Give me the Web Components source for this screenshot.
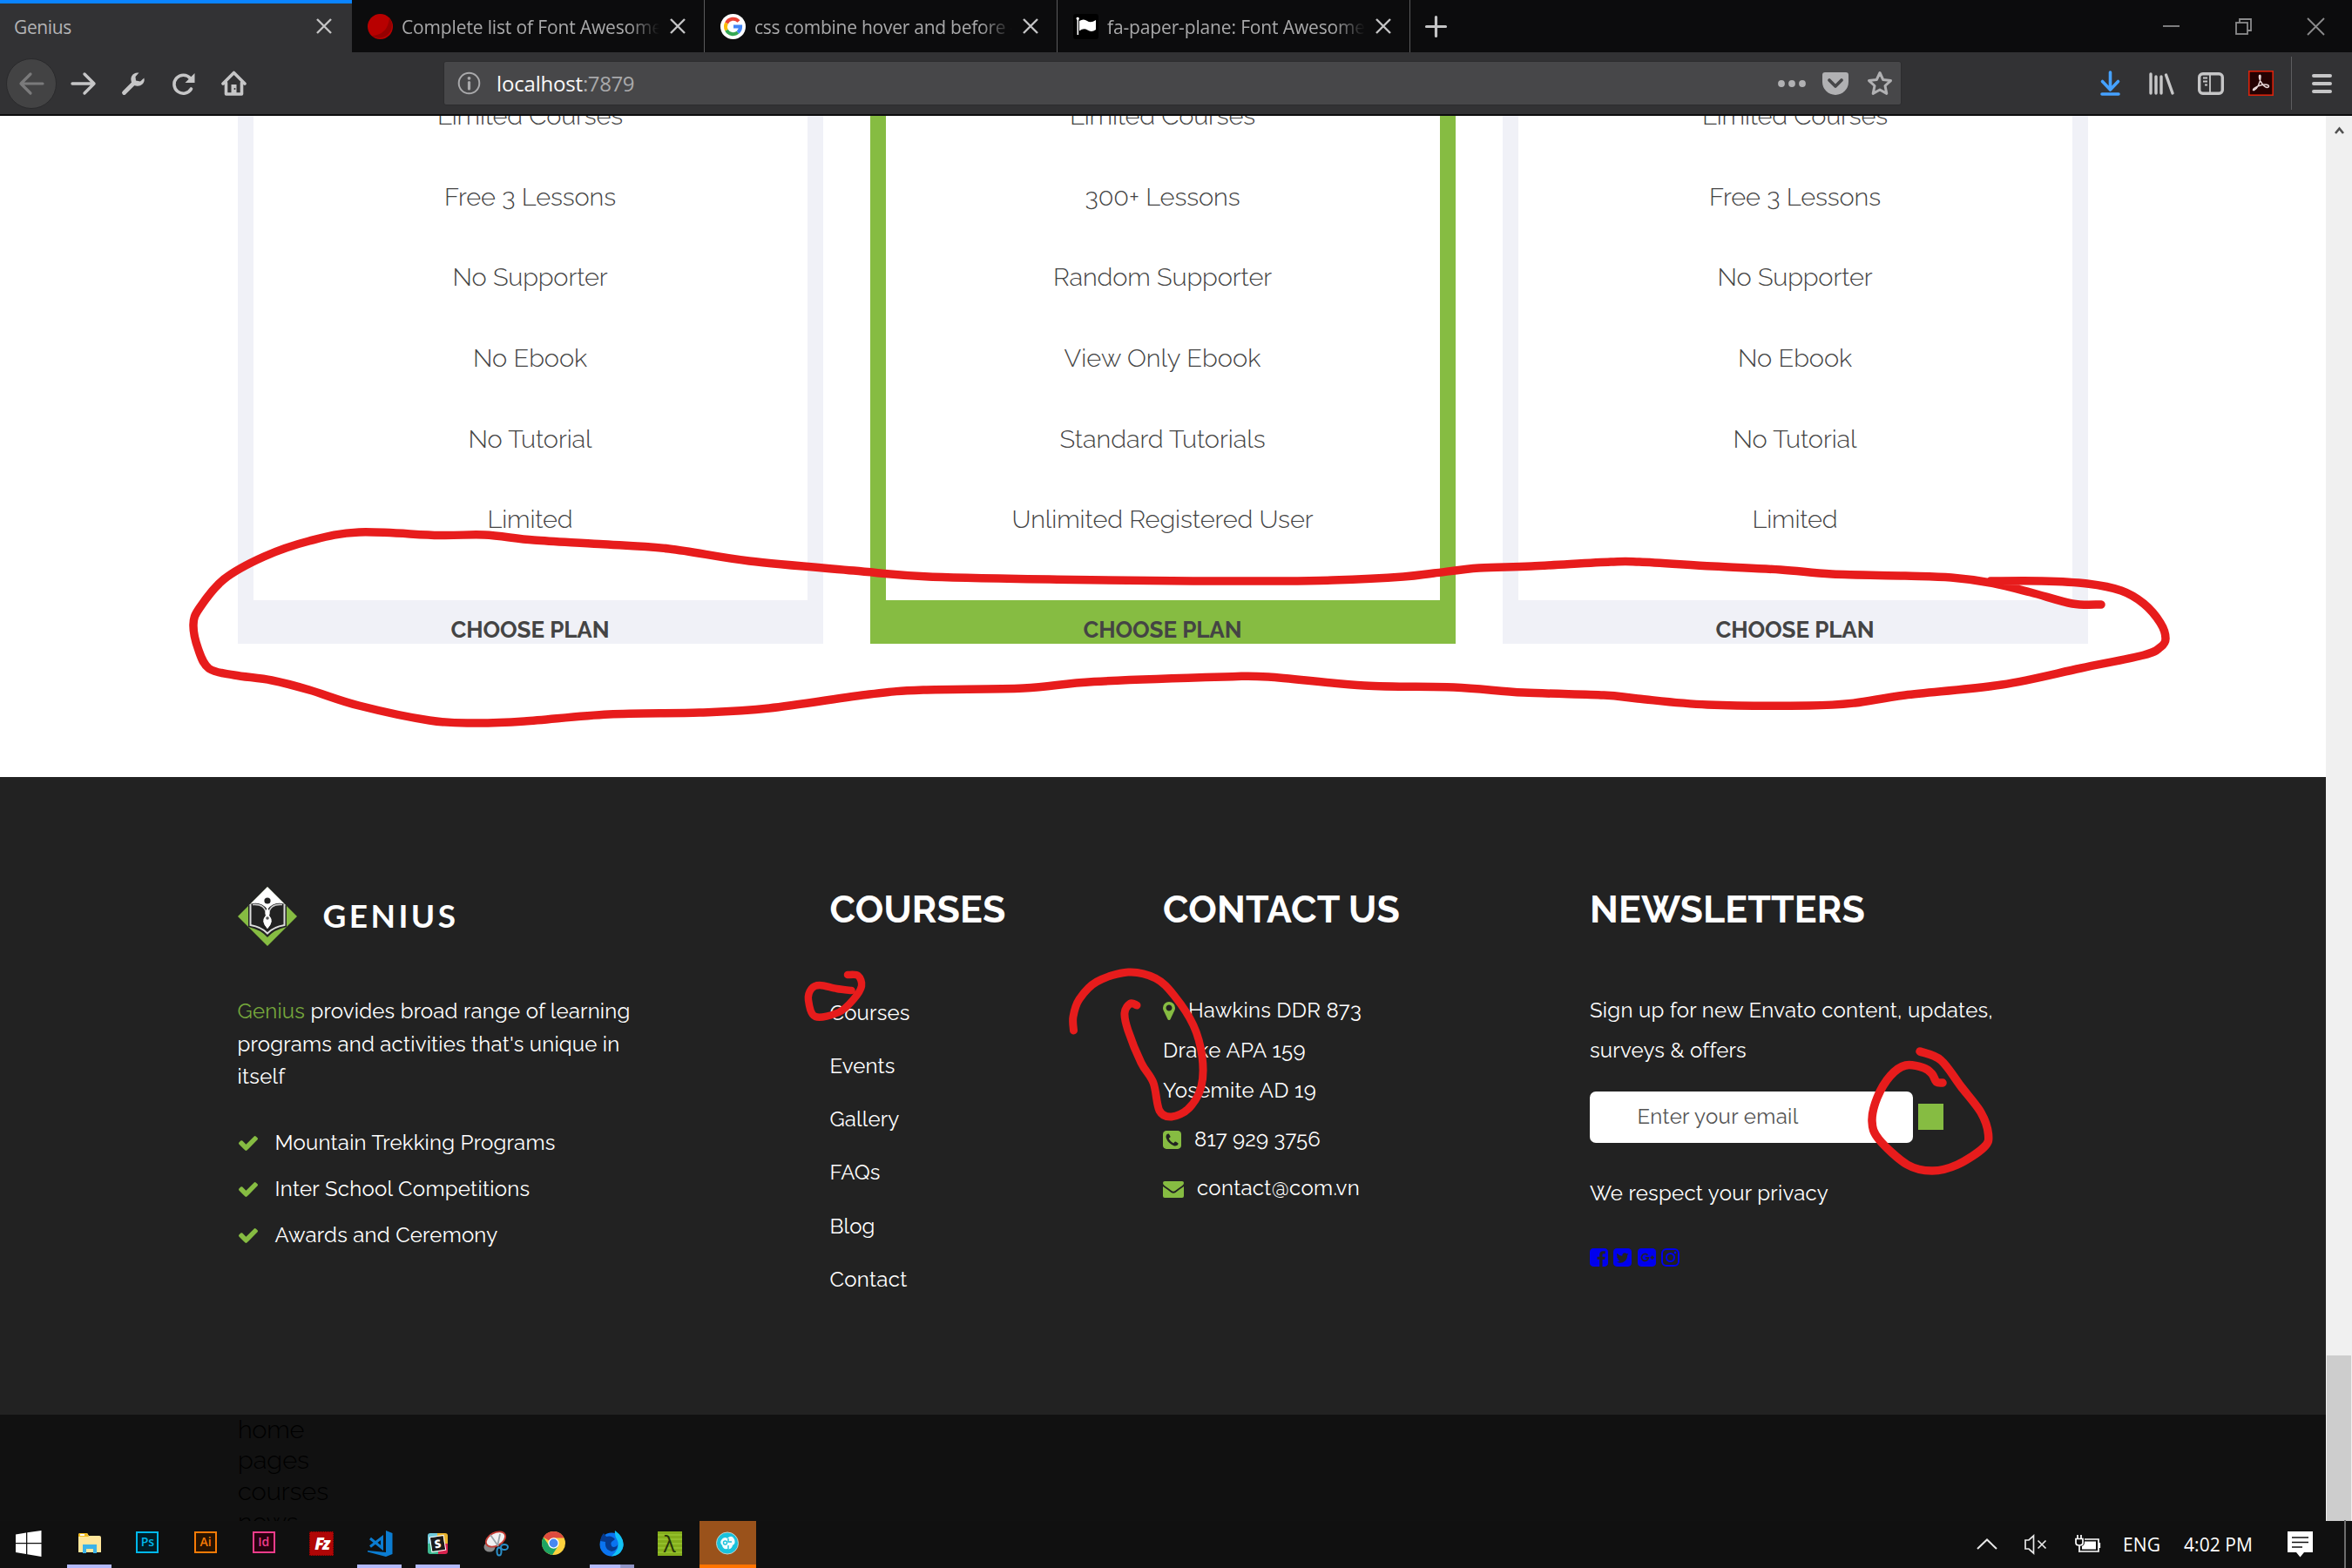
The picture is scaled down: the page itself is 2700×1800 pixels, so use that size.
<!DOCTYPE html>
<html lang="en">
<head>
<meta charset="utf-8">
<title>Genius</title>
<style>
html,body{margin:0;padding:0;width:2700px;height:1800px;overflow:hidden;background:#fff}
</style>
</head>
<body>
<desktop-screen></desktop-screen>
<script>
const UI = '"Open Sans","Noto Sans",sans-serif';
const WEB = 'Raleway,Lato,sans-serif';

function define(name, html, after) {
  const tpl = document.createElement('template');
  tpl.innerHTML = '<style>*{box-sizing:border-box}svg{display:block;overflow:visible}</style>' + html;
  customElements.define(name, class extends HTMLElement {
    constructor() {
      super();
      this.attachShadow({ mode: 'open' }).appendChild(tpl.content.cloneNode(true));
    }
    connectedCallback() { if (after) after.call(this, this.shadowRoot); }
  });
}

/* A single line of text whose tracking is tuned to a given advance width. */
define('fit-text', `<style>:host{display:inline-block;white-space:pre}span{display:inline-block}</style><span><slot></slot></span>`, function (root) {
  const w = +this.getAttribute('w') - 2;
  const n = this.textContent.length;
  if (w <= 0 || !n) return;
  const span = root.querySelector('span');
  span.style.letterSpacing = '0px';
  const m = span.getBoundingClientRect().width;
  if (m) span.style.letterSpacing = ((w - m) / n).toFixed(3) + 'px';
});

/* ---------- Browser chrome ---------- */
define('browser-tab', `<style>
:host{display:flex;align-items:center;width:405px;height:60px;padding:0 21px 0 18px;border-right:1.5px solid #5b5b5c;color:#a9a9aa;font:21px ${UI};background:#0c0c0d}
:host([active]){width:404px;background:#323234;border-right:0;border-top:4.5px solid #0a84ff;padding:0 23px 4px 16px;color:#b4b4b6}
.t{flex:1;overflow:hidden;line-height:32px;padding-top:1px;-webkit-mask-image:linear-gradient(90deg,#000 88%,transparent 100%);mask-image:linear-gradient(90deg,#000 88%,transparent 100%)}
:host([active]) .t{-webkit-mask-image:none;mask-image:none}
::slotted(svg){display:block;margin-right:10px;flex:none}
.x{margin-left:12px;flex:none}
</style><slot name="icon"></slot><div class="t"><slot></slot></div>
<svg class="x" width="18" height="18" viewBox="0 0 18 18" stroke="#c4c4c5" stroke-width="2.4" fill="none"><path d="M1 1L17 17M17 1L1 17"/></svg>`);

define('tab-strip', `<style>
:host{display:flex;height:60px;background:#0c0c0d;align-items:center}
.plus{margin-left:17px}
.win{margin-left:auto;display:flex;align-items:center;gap:64px;padding-right:32px}
</style>
<browser-tab active><fit-text w="68">Genius</fit-text></browser-tab>
<browser-tab><svg slot="icon" width="29" height="29" viewBox="0 0 29 29"><circle cx="14.5" cy="14.5" r="14.5" fill="#b80000"/><path d="M25 4.500A14.500 14.500 0 0 1 5 25Q23 24 25 4.500Z" fill="#950000"/></svg><fit-text w="301">Complete list of Font Awesome</fit-text></browser-tab>
<browser-tab><svg slot="icon" width="29" height="29" viewBox="0 0 29 29"><circle cx="14.5" cy="14.5" r="14.500" fill="#fff"/><g fill="none" stroke-width="4"><path d="M21 8.500A8.600 8.600 0 0 0 7 10.500" stroke="#ea4335"/><path d="M7 10.500A8.600 8.600 0 0 0 7 18.600" stroke="#fbbc05"/><path d="M7 18.600A8.600 8.600 0 0 0 20 21.300" stroke="#34a853"/><path d="M20 21.300A8.600 8.600 0 0 0 23.100 14.600H15" stroke="#4285f4"/></g></svg><fit-text w="302">css combine hover and before -</fit-text></browser-tab>
<browser-tab><svg slot="icon" width="29" height="29" viewBox="0 0 29 29"><rect width="29" height="29" rx="3" fill="#000"/><path d="M3.500 5.500a1.700 1.700 0 1 1 2.600 1.300V24H4.500V7z" fill="#fff"/><path d="M7 8q5-3 9 0t10-1v11q-5 3.500-9.500.5T7 19.500z" fill="#fff"/></svg><fit-text w="298">fa-paper-plane: Font Awesome</fit-text></browser-tab>
<svg class="plus" width="25" height="25" viewBox="0 0 25 25" stroke="#c4c4c5" stroke-width="3.200" stroke-linecap="round"><path d="M12.500 1.500V23.500M1.500 12.500H23.500"/></svg>
<div class="win">
<svg width="19" height="19" viewBox="0 0 19 19" stroke="#8b8b8c" stroke-width="1.8"><path d="M0 9H19"/></svg>
<svg width="19" height="19" viewBox="0 0 19 19" stroke="#8b8b8c" stroke-width="1.800" fill="none"><rect x="1" y="5" width="13" height="13"/><path d="M5 5V1H18V14H14"/></svg>
<svg width="19" height="19" viewBox="0 0 19 19" stroke="#8b8b8c" stroke-width="1.800"><path d="M0 0L19 19M19 0L0 19"/></svg>
</div>`);

define('nav-bar', `<style>
:host{display:flex;height:73px;background:#323234;border-bottom:2px solid #0c0c0d;align-items:center;padding:0 23px 0 7px}
.back{width:58px;height:58px;border-radius:50%;background:#434344;border:1.500px solid #2a2a2c;display:grid;place-items:center;margin-right:16px}
.l{display:flex;align-items:center}
.url{margin-left:226px;width:1674px;height:51px;background:#474749;border:1.500px solid #2c2c2e;border-radius:3px;display:flex;align-items:center;padding:0 9px 0 15px;color:#a9a9ab;font:24px/34px ${UI}}
.url b{font-weight:400;color:#f9f9fa}
.url .txt{margin-left:18px;padding-top:1px}
.r{margin-left:auto;display:flex;align-items:center}
.sep{width:1.500px;height:61px;background:#5d5d5f;margin:0 23px 0 20px}
</style>
<div class="l">
<div class="back"><svg width="29" height="26" viewBox="0 0 29 26" fill="none" stroke="#7a7a7b" stroke-width="3.200" stroke-linecap="round" stroke-linejoin="round"><path d="M27 13H2M13 2L2 13L13 24"/></svg></div>
<svg width="29" height="26" viewBox="0 0 29 26" fill="none" stroke="#c6c6c7" stroke-width="3.400" stroke-linecap="round" stroke-linejoin="round"><path d="M2 13H27M16 2L27 13L16 24"/></svg>
<svg style="margin-left:30px" width="26" height="26" viewBox="0 0 26 26"><path d="M2.500 23.500L14 12" stroke="#c6c6c7" stroke-width="4.800" stroke-linecap="round"/><path d="M19.500.6A7.500 7.500 0 0 0 10.500 9.500Q11 15 16 15.500A7.500 7.500 0 0 0 25.400 6.500L21 10.500L16 9.500L15.500 5Z" fill="#c6c6c7"/></svg>
<svg style="margin-left:31px" width="27" height="26" viewBox="0 0 27 26"><path d="M21.500 7A10.500 10.500 0 1 0 22.500 19" fill="none" stroke="#c6c6c7" stroke-width="3.600" stroke-linecap="round"/><path d="M26.500 1V12H15.500Z" fill="#c6c6c7"/></svg>
<svg style="margin-left:30px" width="29" height="29" viewBox="0 0 29 29"><path d="M2 15L14.500 2.500L27 15M5.500 14V27H23.500V14" fill="none" stroke="#c6c6c7" stroke-width="3.600" stroke-linejoin="round" stroke-linecap="round"/><path d="M11.500 27V16H17.500V27Z" fill="#c6c6c7"/><circle cx="15.500" cy="21" r="1" fill="#323234"/></svg>
</div>
<div class="url">
<svg width="27" height="27" viewBox="0 0 27 27"><circle cx="13.500" cy="13.500" r="11.800" fill="none" stroke="#a9a9ab" stroke-width="2"/><circle cx="13.500" cy="7.800" r="1.900" fill="#a9a9ab"/><path d="M13.500 12.500V20" stroke="#a9a9ab" stroke-width="3.200" stroke-linecap="round"/></svg>
<span class="txt"><b><fit-text w="101">localhost</fit-text></b><fit-text w="61">:7879</fit-text></span>
<svg style="margin-left:auto" width="32" height="8" viewBox="0 0 32 8" fill="#b1b1b3"><circle cx="4" cy="4" r="3.900"/><circle cx="16" cy="4" r="3.900"/><circle cx="28" cy="4" r="3.900"/></svg>
<svg style="margin-left:19px" width="30" height="26" viewBox="0 0 30 26"><path d="M3 0H27Q30 0 30 3V11A15 15 0 0 1 0 11V3Q0 0 3 0Z" fill="#b1b1b3"/><path d="M8 9L15 16L22 9" stroke="#474749" stroke-width="3.800" fill="none" stroke-linecap="round" stroke-linejoin="round"/></svg>
<svg style="margin-left:21px" width="30" height="29" viewBox="0 0 30 29"><path d="M15 2.500L18.700 10.500L27.500 11.600L21 17.500L22.800 26.400L15 22L7.200 26.400L9 17.500L2.500 11.600L11.300 10.500Z" fill="none" stroke="#b1b1b3" stroke-width="3" stroke-linejoin="round"/></svg>
</div>
<div class="r">
<svg width="23" height="29" viewBox="0 0 23 29" fill="none" stroke="#45a1ff" stroke-width="3.600" stroke-linecap="round" stroke-linejoin="round"><path d="M11.500 2V21M2.500 12.500L11.500 22L20.500 12.500M2 27H21"/></svg>
<svg style="margin-left:33px" width="29" height="26" viewBox="0 0 29 26" stroke="#c6c6c7" stroke-width="3.400" stroke-linecap="round"><path d="M2 2V24M8 5V24M14 5V24M19.500 3L27 24"/></svg>
<svg style="margin-left:27px" width="30" height="26" viewBox="0 0 30 26"><rect x="1.700" y="1.700" width="26.600" height="22.600" rx="4" fill="none" stroke="#c6c6c7" stroke-width="3.400"/><path d="M14 3V24" stroke="#c6c6c7" stroke-width="1.800"/><path d="M6 6.500H11M6 10.500H11M8 14.500H11" stroke="#c6c6c7" stroke-width="2"/></svg>
<svg style="margin-left:28px" width="29" height="29" viewBox="0 0 29 29"><rect x=".8" y=".8" width="27.400" height="27.400" fill="#250202" stroke="#d9230d" stroke-width="1.600"/><path d="M6.500 22.500C10 21 14 14 14 7Q14 4.500 12.700 5.500C11.500 9 16 18 21.500 19.500Q24.500 19 23 17C19 14.500 10 17.500 6.500 20.500Q4.500 23 6.500 22.500Z" fill="none" stroke="#e8d8d8" stroke-width="1.500"/></svg>
<div class="sep"></div>
<svg width="23" height="24" viewBox="0 0 23 24" stroke="#c6c6c7" stroke-width="4" stroke-linecap="round"><path d="M2 3H21M2 12H21M2 21H21"/></svg>
</div>`);

/* ---------- Pricing ---------- */
define('plan-card', `<style>
:host{display:flex;flex-direction:column;width:672px;--c:#f0f1f7;font:300 29px/92.600px ${WEB};color:#444}
:host([featured]){--c:#86bc42}
.rows{border:solid var(--c);border-width:0 18px;height:556px;display:flex;flex-direction:column;align-items:center;justify-content:flex-end;padding-bottom:46.200px}
.btn{background:var(--c);height:50px;padding-top:14px;text-align:center;font:700 26px/40px ${WEB};color:#444}
</style><div class="rows"><slot></slot></div><div class="btn"><fit-text w="184">CHOOSE PLAN</fit-text></div>`);

const basic = `<fit-text w="215">Limited Courses</fit-text><fit-text w="199">Free 3 Lessons</fit-text><fit-text w="180">No Supporter</fit-text><fit-text w="133">No Ebook</fit-text><fit-text w="144">No Tutorial</fit-text><fit-text w="100">Limited</fit-text>`;
define('plan-list', `<style>
:host{display:flex;gap:54px;padding-left:272.500px;height:759px;align-items:flex-start;overflow:hidden;background:#fff}
</style>
<plan-card>${basic}</plan-card>
<plan-card featured><fit-text w="215">Limited Courses</fit-text><fit-text w="180">300+ Lessons</fit-text><fit-text w="253">Random Supporter</fit-text><fit-text w="228">View Only Ebook</fit-text><fit-text w="238">Standard Tutorials</fit-text><fit-text w="348">Unlimited Registered User</fit-text></plan-card>
<plan-card>${basic}</plan-card>`);

/* ---------- Footer ---------- */
define('footer-title', `<style>:host{display:block;font:700 43px/52px ${WEB};color:#fff;padding-top:1.500px;height:52px}</style><slot></slot>`);

define('genius-logo', `<style>
:host{display:flex;align-items:center;height:68px;margin-top:1.500px;color:#fff;font:700 37px/44px Lato,sans-serif}
fit-text{margin-left:30px;margin-top:-2px}
</style>
<svg width="68" height="68" viewBox="0 0 68 68"><path d="M34 0L68 34L34 68L0 34Z" fill="#86bc42"/><path d="M12 22L34 0L56 22V46Q42 49 34 58Q26 49 12 46Z" fill="#222"/><path d="M14 20L34 0L54 20Q42 16 34 26Q26 16 14 20Z" fill="#fff"/>
<circle cx="34" cy="16" r="3.600" fill="#222"/>
<path d="M14.500 20V44Q27 46 34 53.500Q41 46 53.500 44V20" fill="none" stroke="#ddd" stroke-width="2"/>
<path d="M17 20.500Q32 19 33 33Q27 39 34 47Q41 39 35 33Q36 19 51 20.500" fill="none" stroke="#ccc" stroke-width="1.700"/>
<path d="M34 24Q38 30 36 33Q42 40 34 48Q26 40 32 33Q30 30 34 24Z" fill="#fff"/><circle cx="34" cy="36" r="1.800" fill="#555"/></svg>
<fit-text w="158">GENIUS</fit-text>`);

define('check-item', `<style>:host{display:flex;align-items:center;gap:20px;height:53px;line-height:53px}svg{margin-left:1px;margin-top:2px}</style>
<svg width="22" height="17" viewBox="121 334 1550 1188" preserveAspectRatio="none" fill="#86bc42"><path d="M1671 566q0 40-28 68l-724 724-136 136q-28 28-68 28t-68-28l-136-136-362-362q-28-28-28-68t28-68l136-136q28-28 68-28t68 28l294 295 656-657q28-28 68-28t68 28l136 136q28 28 28 68z"/></svg><span><slot></slot></span>`);

const SQ = 'M1376 128q119 0 203.500 84.500t84.500 203.500v960q0 119-84.500 203.500t-203.500 84.500h-960q-119 0-203.500-84.500t-84.500-203.500v-960q0-119 84.500-203.500t203.500-84.500z';
define('site-footer', `<style>
:host{display:flex;height:732px;background:#222;padding:124px 0 0 272.500px;color:#fff;font:24px/46px ${WEB};font-weight:400}
.col{display:flex;flex-direction:column;align-items:flex-start}
.c1{width:680px}.c2{width:382.500px}.c3{width:490px}
.p{margin-top:56.500px;margin-bottom:30.500px;line-height:37.500px;display:flex;flex-direction:column}
.g{color:#76a83c}
.links{display:flex;flex-direction:column;margin-top:63.500px;line-height:61.300px}
.body{display:flex;flex-direction:column;align-items:flex-start;margin-top:69px}
.row{display:flex;align-items:center;height:46px}
.gap{margin-top:10.200px}
.form{display:flex;align-items:center;gap:6px;margin-top:24px}
.in{width:371px;height:58.500px;border-radius:7px;background:#fff;color:#555;padding-left:54.500px;line-height:58px}
.sq{width:29px;height:30px;background:#86bc42}
.soc{display:flex;gap:6.300px;margin-top:40px;fill:#00e}
</style>
<div class="col c1"><genius-logo></genius-logo>
<div class="p"><div><span class="g"><fit-text w="86">Genius </fit-text></span><fit-text w="369">provides broad range of learning</fit-text></div><div><fit-text w="441">programs and activities that's unique in</fit-text></div><div><fit-text w="57">itself</fit-text></div></div>
<check-item><fit-text w="324">Mountain Trekking Programs</fit-text></check-item>
<check-item><fit-text w="295">Inter School Competitions</fit-text></check-item>
<check-item><fit-text w="258">Awards and Ceremony</fit-text></check-item></div>
<div class="col c2"><footer-title><fit-text w="204">COURSES</fit-text></footer-title>
<div class="links"><fit-text w="94">Courses</fit-text><fit-text w="77">Events</fit-text><fit-text w="82">Gallery</fit-text><fit-text w="60">FAQs</fit-text><fit-text w="54">Blog</fit-text><fit-text w="91">Contact</fit-text></div></div>
<div class="col c3"><footer-title><fit-text w="274">CONTACT US</fit-text></footer-title>
<div class="body">
<div class="row"><svg style="margin-right:15px" width="14" height="21" viewBox="384 128 1024 1536" fill="#86bc42"><path d="M1152 640q0-106-75-181t-181-75-181 75-75 181 75 181 181 75 181-75 75-181zm256 0q0 109-33 179l-364 774q-16 33-47.500 52t-67.500 19-67.500-19-46.500-52l-365-774q-33-70-33-179 0-212 150-362t362-150 362 150 150 362z"/></svg><fit-text w="201">Hawkins DDR 873</fit-text></div>
<div class="row"><fit-text w="166">Drake APA 159</fit-text></div>
<div class="row"><fit-text w="178">Yosemite AD 19</fit-text></div>
<div class="row gap"><svg style="margin-right:15px" width="21" height="21" viewBox="128 128 1536 1536" fill="#86bc42"><path d="${SQ}"/><path fill="#222" d="M1408 1193q0-11-2-16t-18-16.500-40.500-25-47.500-26.500-45.500-25-28.500-15q-5-3-19-13t-25-15-21-5q-15 0-36.500 20.500t-39.500 45-38.500 45-33.500 20.500q-7 0-16.500-3.500t-15.500-6.500-17-9.500-14-8.500q-99-55-170-126.500t-127-170.500q-2-3-8.500-14t-9.500-17-6.500-15.500-3.500-16.500q0-13 20.500-33.500t45-38.500 45-39.500 20.500-36.500q0-10-5-21t-15-25-13-19q-3-6-15-28.500t-25-45.500-26.500-47.500-25-40.500-16.500-18-16-2q-48 0-101 22-46 21-80 94.500t-34 130.500q0 16 2.500 34t5 30.500 9 33 10 29.500 12.500 33 11 30q60 164 216.500 320.500t320.500 216.500q6 2 30 11t33 12.500 29.500 10 33 9 30.500 5 34 2.500q57 0 130.500-34t94.500-80q22-53 22-101z"/></svg><fit-text w="147">817 929 3756</fit-text></div>
<div class="row gap"><svg style="margin-right:15px;margin-top:3px" width="24" height="19" viewBox="0 0 24 19" fill="#86bc42"><path d="M0 6Q6 10 9.500 13Q12 14.500 14.500 13Q18 10 24 6V17Q24 19 22 19H2Q0 19 0 17Z"/><path d="M2 0H22Q24 0 24 2Q24 4 22 5.300Q18 8 14 11Q12 12.400 10 11Q6 8 2 5.300Q0 4 0 2Q0 0 2 0Z"/></svg><fit-text w="189">contact@com.vn</fit-text></div>
</div></div>
<div class="col c4"><footer-title><fit-text w="318">NEWSLETTERS</fit-text></footer-title>
<div class="body"><fit-text w="465">Sign up for new Envato content, updates,</fit-text><fit-text w="180">surveys &amp; offers</fit-text>
<div class="form"><div class="in"><fit-text w="187">Enter your email</fit-text></div><div class="sq"></div></div>
<fit-text w="276" style="margin-top:35.500px">We respect your privacy</fit-text>
<div class="soc">
<svg width="21" height="21" viewBox="128 128 1536 1536"><path d="M1376 128q119 0 203.500 84.500t84.500 203.500v960q0 119-84.500 203.500t-203.500 84.500h-188v-595h199l30-232h-229v-148q0-56 23.500-84t91.500-28l122-1v-207q-63-9-178-9-136 0-217.500 80t-81.500 226v171h-200v232h200v595h-532q-119 0-203.500-84.500t-84.500-203.500v-960q0-119 84.500-203.500t203.500-84.500h960z"/></svg>
<svg width="21" height="21" viewBox="128 128 1536 1536"><path d="${SQ}"/><path fill="#222" d="M1408 610q-56 25-121 34 68-40 93-117-65 38-134 51-61-66-153-66-87 0-148.500 61.500t-61.500 148.500q0 29 5 48-129-7-242-65t-192-155q-29 50-29 106 0 114 91 175-47-1-100-26v2q0 75 50 133.500t123 72.500q-29 8-51 8-13 0-39-4 21 63 74.500 104t121.500 42q-116 90-261 90-26 0-50-3 148 94 322 94 112 0 210-35.500t168-95 120.500-137 75-162 24.500-168.500q0-18-1-27 63-45 105-109z"/></svg>
<svg width="21" height="21" viewBox="128 128 1536 1536"><path d="${SQ}"/><path d="M960 700A290 290 0 1 0 1030 930H760M1190 900H1500M1345 745V1055" fill="none" stroke="#222" stroke-width="125"/></svg>
<svg width="21" height="21" viewBox="0 0 21 21"><rect x="1" y="1" width="19" height="19" rx="5" fill="none" stroke="#00e" stroke-width="2"/><circle cx="10.500" cy="10.500" r="4.500" fill="none" stroke="#00e" stroke-width="2"/><circle cx="16" cy="5" r="1.400"/></svg>
</div></div></div>`);

define('bottom-menu', `<style>:host{display:flex;flex-direction:column;align-items:flex-start;height:122px;background:#111;padding-left:273px;font:300 29px/35.300px ${WEB};color:#000;overflow:hidden}</style>
<fit-text w="78">home</fit-text><fit-text w="84">pages</fit-text><fit-text w="106">courses</fit-text><fit-text w="71">news</fit-text>`);

define('scroll-bar', `<style>
:host{display:flex;flex-direction:column;justify-content:space-between;width:30px;height:1613px;background:#f0f0f0}
svg{margin:10px 0 0 10px}
.thumb{height:190px;background:#cdcdcd;margin:0 1px}
</style><svg width="11" height="14" viewBox="0 0 11 14"><path d="M1 10L5.500 4.500L10 10" fill="none" stroke="#505050" stroke-width="2.600"/></svg><div class="thumb"></div>`);

define('web-page', `<style>:host{display:flex;height:1613px}.m{width:2670px;display:flex;flex-direction:column}</style>
<div class="m"><plan-list></plan-list><site-footer></site-footer><bottom-menu></bottom-menu></div><scroll-bar></scroll-bar>`);

/* ---------- Taskbar ---------- */
define('task-item', `<style>
:host{display:flex;flex-direction:column;align-items:center;width:66.600px;height:54px}
.i{height:50px;width:100%;display:grid;place-items:center;padding-top:1px}
.u{width:51px;height:4px}
:host([open]) .u{background:#b2b9fb}
:host([multi]) .u{background:linear-gradient(90deg,#b2b9fb 68%,#8f94c6 70%)}
:host([active]) .i{background:#9a521b;width:65px}
:host([active]) .u{background:#ff7300;width:65px}
</style><div class="i"><slot></slot></div><div class="u"></div>`);

define('app-tile', `<style>:host{display:grid;place-items:center;width:26px;height:25px;border:2px solid var(--c);color:var(--c);background:var(--b);font:600 14px/18px ${UI};margin-bottom:3px}</style><slot></slot>`);

define('task-bar', `<style>
:host{display:flex;height:54px;background:#101010;color:#fff}
task-item:first-of-type{margin-right:3px}
.fz{display:grid;place-items:center;width:28px;height:28px;background:#b00606;border:1px dotted #5d0000;font:italic 800 19px/24px ${UI};letter-spacing:-2px;color:#fff}
.la{display:grid;place-items:center;width:28px;height:28px;background:repeating-linear-gradient(#84ad1c 0 3px,#93bf2b 3px 5px);color:#26320a;font:400 26px/26px ${UI}}
.tray{margin-left:auto;display:flex;align-items:center;font:21px/30px ${UI};padding-bottom:1px}
.end{width:2px;height:55px;background:#6d6d6d;margin-left:36px;margin-right:7px}
.sl{display:grid;place-items:center;width:23px;height:24px;border-radius:3px;background:conic-gradient(#e9b42f 0 90deg,#d7234e 90deg 180deg,#3eb991 180deg 270deg,#70cadb 270deg);color:#fff}
.sl span{display:grid;place-items:center;width:15px;height:16px;background:#1b1b1b;font:800 13px/15px ${UI};transform:rotate(-9deg);outline:1px solid #fff}
</style>
<task-item><svg width="30" height="30" viewBox="0 0 30 30" fill="#fff"><path d="M0 4.500L12 2.500V14H0ZM13.300 2.300L29.500 0V14H13.300ZM0 15.300H12V27L0 25ZM13.300 15.300H29.500V30L13.300 27.300Z"/></svg></task-item>
<task-item open><svg width="26" height="26" viewBox="0 0 26 26"><path d="M0 3Q0 1 2 1H10L12 4H24Q26 4 26 6V23H0Z" fill="#ffe69b"/><path d="M0 3Q0 1 2 1H10L12 5H0Z" fill="#f3bd1f"/><rect x="2" y="2" width="5" height="2" fill="#fff"/><path d="M5 14H21V24H17V19H9V24H5Z" fill="#3bb2e8"/></svg></task-item>
<task-item><app-tile style="--c:#00b8ec;--b:#001d27">Ps</app-tile></task-item>
<task-item><app-tile style="--c:#f77b06;--b:#271300">Ai</app-tile></task-item>
<task-item><app-tile style="--c:#ef3c8b;--b:#28000f">Id</app-tile></task-item>
<task-item><div class="fz">Fz</div></task-item>
<task-item open><svg width="30" height="30" viewBox="0 0 30 30"><path d="M22 0L29.500 3V27L22 30L1 24.500V23L22 25Z" fill="#0b7cd1"/><path d="M4 9L17.500 20V8L4 18.500" fill="none" stroke="#0b7cd1" stroke-width="3"/></svg></task-item>
<task-item open><div class="sl"><span>S</span></div></task-item>
<task-item><svg width="30" height="30" viewBox="0 0 30 30"><ellipse cx="8" cy="19" rx="6.500" ry="5.500" fill="#8a8a8a"/><ellipse cx="15" cy="10" rx="12" ry="7.500" transform="rotate(-28 15 10)" fill="#f2f2f2" stroke="#c33a32" stroke-width="1.800"/><path d="M9 5L18 18M20 4L17 18" stroke="#9aa3a8" stroke-width="1.800"/><g fill="none" stroke="#2a8fc9" stroke-width="2"><ellipse cx="25" cy="19" rx="4" ry="3"/><ellipse cx="19" cy="24" rx="2.500" ry="4.500"/></g></svg></task-item>
<task-item><svg width="27" height="27" viewBox="0 0 27 27"><circle cx="13.500" cy="13.500" r="13.500" fill="#fdd23e"/><path d="M13.500 13.500L1.800 6.700A13.500 13.500 0 0 1 25.500 7.500H13.500Z" fill="#dd4b3e"/><path d="M1.800 6.700A13.500 13.500 0 0 0 12 26.900L18.500 17L8.500 16.500Z" fill="#1da462"/><circle cx="13.500" cy="13.500" r="6.200" fill="#fff"/><circle cx="13.500" cy="13.500" r="4.900" fill="#4688f1"/></svg></task-item>
<task-item open multi><svg width="29" height="30" viewBox="0 0 29 30"><circle cx="14" cy="16" r="13.500" fill="#0a74f0"/><path d="M18 0Q29 8 27.500 18Q25 29 14 29.500Q24 21 21 12Q17 6 18 0Z" fill="#12c3f5"/><path d="M1 12Q2 6 5 3L8 7Q14 5 18 10L14 13Q12 17 16 19Q20 19 21 16Q21 23 14 24Q6 22 7 13Z" fill="#063a8c"/></svg></task-item>
<task-item><div class="la">λ</div></task-item>
<task-item active><svg width="26" height="27" viewBox="0 0 26 27"><circle cx="13" cy="13.500" r="12.500" fill="#19c2dc" stroke="#c6cfc6" stroke-width="1"/><path d="M6 10Q9 5 13 8Q18 3 21 9Q23 14 19 16Q18 21 13 20Q8 21 7 16Q4 13 6 10Z" fill="#f2fbfc"/><circle cx="10.500" cy="13" r="2" fill="none" stroke="#19c2dc" stroke-width="1.400"/><path d="M14 8V12H18M14 20V16" stroke="#19c2dc" stroke-width="1.400" fill="none"/></svg></task-item>
<div class="tray">
<svg width="24" height="13" viewBox="0 0 24 13" fill="none" stroke="#e8e8e8" stroke-width="2"><path d="M1 12L12 1.500L23 12"/></svg>
<svg style="margin-left:31px" width="26" height="22" viewBox="0 0 26 22" fill="none" stroke="#e8e8e8" stroke-width="1.700"><path d="M1 6H5L10.500 1V21L5 16H1ZM15.500 6.500L24.500 15.500M24.500 6.500L15.500 15.500"/></svg>
<svg style="margin-left:32px" width="29" height="21" viewBox="0 0 29 21" fill="none" stroke="#fff" stroke-width="1.700"><path d="M11 5H27V19H6M28.300 9V15M3 0V4M7 0V4M1 4.500H9V9Q9 12 5 12Q1 12 1 9ZM5 12V20"/><path d="M11 7.500H24V16.500H8V13Q11 12 11 7.500Z" fill="#fff" stroke="none"/></svg>
<fit-text w="45" style="margin-left:26px">ENG</fit-text><fit-text w="81" style="margin-left:27px">4:02 PM</fit-text>
<svg style="margin-left:40px" width="29" height="30" viewBox="0 0 29 30"><path d="M0 0H29V24H19L14.500 29.500L10 24H0Z" fill="#fff"/><path d="M5 7H24M5 12.500H24M5 18H17" stroke="#101010" stroke-width="1.700"/></svg>
<div class="end"></div>
</div>`);

/* ---------- Hand-drawn pen strokes over the page ---------- */
define('pen-strokes', `<style>:host{position:absolute;left:0;top:0;width:2700px;height:1800px;pointer-events:none}</style><svg width="2700" height="1800" viewBox="0 0 2700 1800" fill="none" stroke="#e71c1c" stroke-linecap="round" stroke-linejoin="round"></svg>`, function (root) {
  const strokes = [
    [9.5, '2412,694 2379,693 2331,680 2285,669 2240,663 2187,661 2103,659 2044,654 1966,650 1882,645 1849,645 1758,650 1698,652 1646,658 1611,662 1530,666 1468,667 1370,667 1233,665.5 1066,662 980,655 860,644 768,630 688,624.5 613,620 556,614 504,614.5 412,611 355,621 303,639 257,665 229,698 222,717 227.5,745 240,767.5 269,775 312,781 355,792 412,810 493,827 544,830 602,828 699,820 803,818 883,813 998,797 1060,792 1175,790 1256,782.5 1405,777 1456,777 1566,787 1669,789 1749,795 1841,798 1880,802 1960,809 2077,810 2129,807 2187,798 2298,786 2389,767 2461,752 2480,743 2486,733 2480,715 2461,693 2435,678 2396,670 2344,667 2285,667'],
    [8.5, '973,1119 985,1120 989,1132 980,1147 963,1162 936,1167 928,1148 931.5,1135 941,1131 960.6,1135 977.5,1137'],
    [9, '1232.500,1183 1232,1167 1239,1147 1259,1127 1295,1116 1326.500,1123 1348,1143 1370,1177 1380,1213 1379,1247 1365,1272 1345,1282 1331,1275 1324,1243 1310,1220 1295,1183 1291,1163 1297.500,1152 1305,1154'],
    [9.500, '2204,1207 2228,1217 2251,1247 2274,1277 2282.500,1302 2277.500,1317 2247,1337 2218,1344 2189.500,1337 2157,1308 2149,1287 2155,1260 2170,1235 2187.600,1223 2208.600,1226 2218,1233 2223,1242 2230,1243']
  ];
  const svg = root.querySelector('svg');
  for (const [w, s] of strokes) {
    const p = s.split(' ').map(q => q.split(',').map(Number));
    let d = 'M' + p[0];
    for (let i = 0; i < p.length - 1; i++) {
      const a = p[i - 1] || p[i], b = p[i], c = p[i + 1], e = p[i + 2] || c;
      d += `C${b[0] + (c[0] - a[0]) / 6} ${b[1] + (c[1] - a[1]) / 6} ${c[0] - (e[0] - b[0]) / 6} ${c[1] - (e[1] - b[1]) / 6} ${c[0]} ${c[1]}`;
    }
    const path = document.createElementNS('http://www.w3.org/2000/svg', 'path');
    path.setAttribute('d', d);
    path.setAttribute('stroke-width', w);
    svg.appendChild(path);
  }
});

define('desktop-screen', `<style>:host{display:flex;flex-direction:column;position:relative;width:2700px;height:1800px;overflow:hidden}</style>
<tab-strip></tab-strip><nav-bar></nav-bar><web-page></web-page><task-bar></task-bar><pen-strokes></pen-strokes>`);
</script>
</body>
</html>
